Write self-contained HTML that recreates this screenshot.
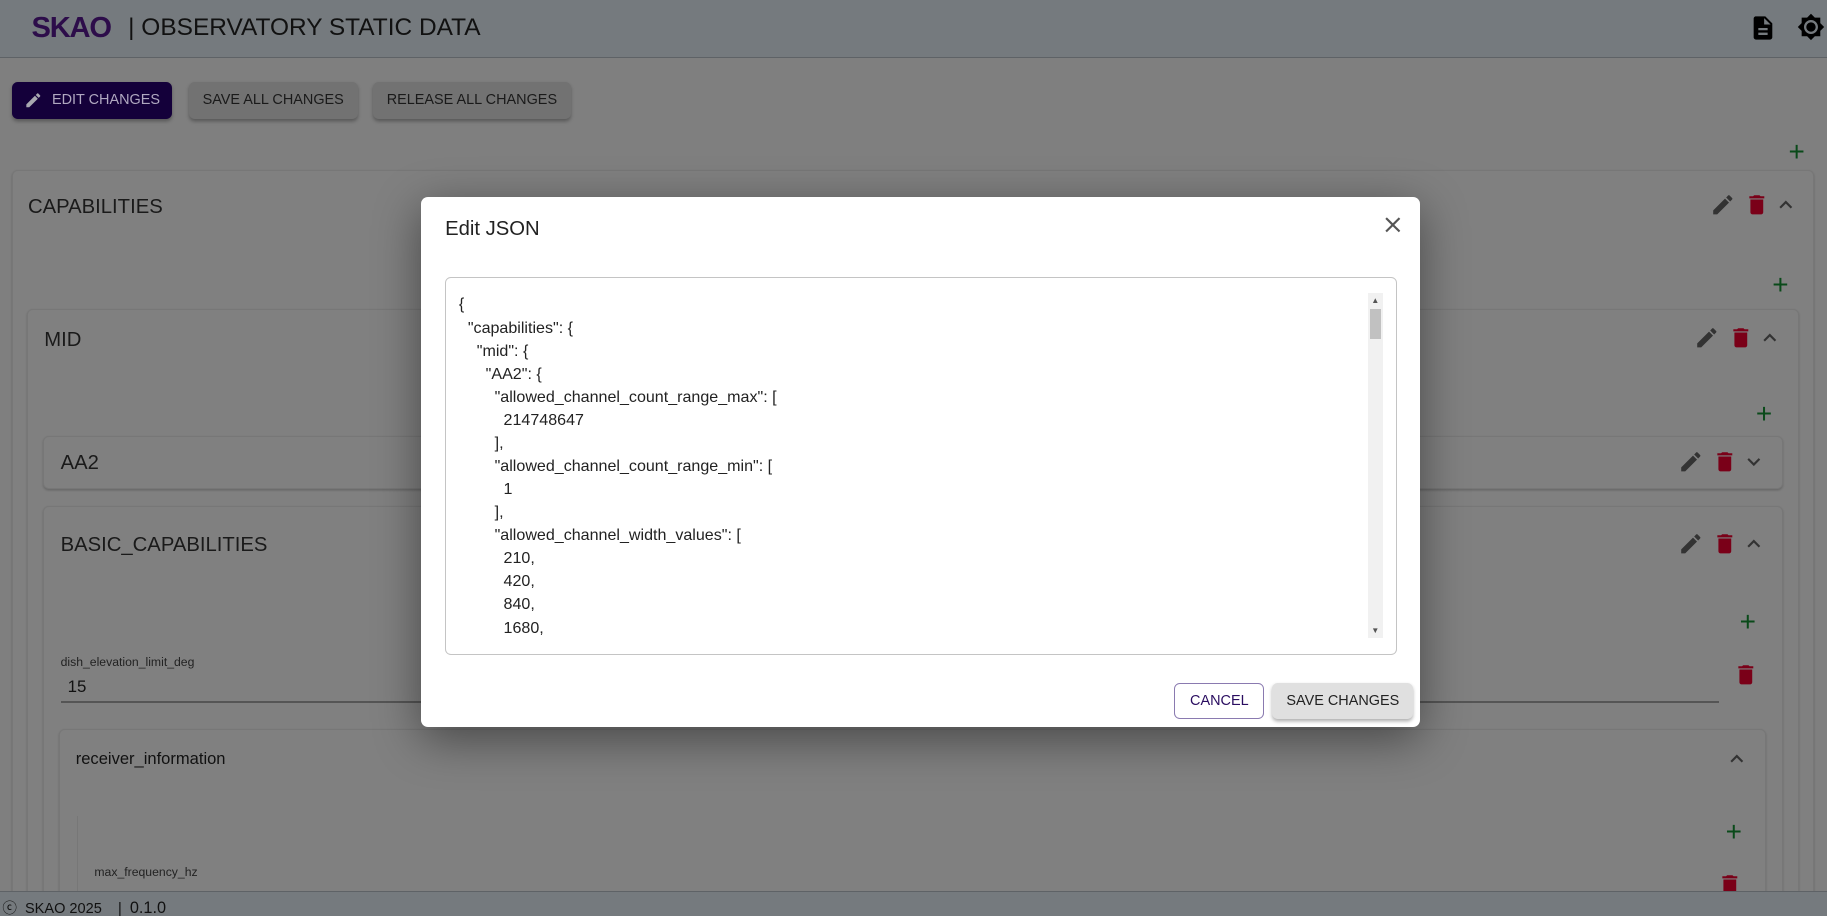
<!DOCTYPE html>
<html><head><meta charset="utf-8"><style>
*{box-sizing:border-box;margin:0;padding:0}
html,body{width:1827px;height:916px;overflow:hidden}
body{font-family:"Liberation Sans",sans-serif;background:#7f7f7f}
#root{zoom:1.16518;width:1568px;height:786px;position:relative;overflow:hidden;background:#7f7f7f}
.abs{position:absolute}
.hdr{left:0;top:0;width:1568px;height:50px;background:#757a7e;border-bottom:1px solid #5e6266}
.btn{position:absolute;top:70px;height:32px;border-radius:5px;font-size:12.4px;display:flex;align-items:center;justify-content:center;color:#1a1a1a;background:#727272;box-shadow:0 2px 3px rgba(0,0,0,.3)}
.card{position:absolute;border:1px solid #777;border-radius:5px;background:#808080;box-shadow:0 1px 2px rgba(0,0,0,.2)}
.t{position:absolute;font-size:17.4px;color:#1a1a1a}
.ic{position:absolute}
.foot{left:0;top:765px;width:1568px;height:21px;background:#757a7e;border-top:1px solid #5e6266;font-size:12.5px;color:#111}
.dlg{left:361px;top:169px;width:858px;height:455px;background:#fff;border-radius:6px;box-shadow:0 10px 40px rgba(0,0,0,.45)}
.json{position:absolute;left:21px;top:69px;width:817px;height:324px;border:1px solid #c4c4c4;border-radius:5px}
pre{font-family:"Liberation Sans",sans-serif;font-size:13.8px;line-height:19.8px;color:#222;position:absolute;left:11px;top:13px}
</style></head><body><div id="root">
<div class="abs hdr">
 <div class="abs" style="left:27px;top:10px;font-size:25px;font-weight:bold;color:#2d0d4a;letter-spacing:-1px">SKAO</div>
 <div class="abs" style="left:110px;top:12px;font-size:21px;color:#111">| OBSERVATORY STATIC DATA</div>
 <svg class="ic" style="left:1501px;top:12px" width="24" height="24" viewBox="0 0 24 24"><path fill="#000" d="M14 2H6c-1.1 0-2 .9-2 2v16c0 1.1.9 2 2 2h12c1.1 0 2-.9 2-2V8l-6-6zm2 16H8v-2h8v2zm0-4H8v-2h8v2zm-3-5V3.5L18.5 9H13z"/></svg>
 <svg class="ic" style="left:1542px;top:11px" width="24" height="24" viewBox="0 0 24 24"><path fill="#000" d="M20 8.69V4h-4.69L12 .69 8.69 4H4v4.69L.69 12 4 15.31V20h4.69L12 23.31 15.31 20H20v-4.69L23.31 12 20 8.69zM12 18c-3.310 0-6-2.69-6-6s2.69-6 6-6 6 2.69 6 6-2.69 6-6 6zm0-10c-2.21 0-4 1.79-4 4s1.79 4 4 4 4-1.790 4-4-1.79-4-4-4z"/></svg>
</div>
<div class="btn" style="left:10px;width:138px;background:#14003a;color:#b0a8c0"><svg width="16" height="16" viewBox="0 0 24 24" style="margin-right:8px"><path fill="#a8a8b0" d="M3 17.25V21h3.75L17.81 9.94l-3.75-3.75L3 17.25zM20.71 7.04a1 1 0 0 0 0-1.41l-2.34-2.34a1 1 0 0 0-1.41 0l-1.83 1.83 3.75 3.75 1.83-1.83z"/></svg>EDIT CHANGES</div>
<div class="btn" style="left:162px;width:145px">SAVE ALL CHANGES</div>
<div class="btn" style="left:320px;width:170px">RELEASE ALL CHANGES</div>
<div class="ic" style="left:1535px;top:117px;color:#0a4a1a;font-size:24px">+</div>
<div class="card" style="left:10px;top:146px;width:1547px;height:640px"></div>
<div class="t" style="left:24px;top:168px">CAPABILITIES</div>
<div class="ic" style="left:1521px;top:231px;color:#0a4a1a;font-size:24px">+</div>
<div class="card" style="left:23px;top:265px;width:1521px;height:521px"></div>
<div class="t" style="left:38px;top:282px">MID</div>
<div class="ic" style="left:1507px;top:342px;color:#0a4a1a;font-size:24px">+</div>
<div class="card" style="left:37px;top:374px;width:1493px;height:46px"></div>
<div class="t" style="left:52px;top:388px">AA2</div>
<div class="card" style="left:37px;top:434px;width:1493px;height:352px"></div>
<div class="t" style="left:52px;top:458px">BASIC_CAPABILITIES</div>
<div class="ic" style="left:1493px;top:520px;color:#0a4a1a;font-size:24px">+</div>
<div class="abs" style="left:52px;top:562px;font-size:10.5px;color:#222">dish_elevation_limit_deg</div>
<div class="abs" style="left:58px;top:581px;font-size:14.5px;color:#111">15</div>
<div class="abs" style="left:52px;top:602px;width:1423px;height:1px;background:#555"></div>
<div class="card" style="left:51px;top:626px;width:1465px;height:160px"></div>
<div class="abs" style="left:65px;top:643px;font-size:14.2px;color:#111">receiver_information</div>
<div class="ic" style="left:1481px;top:700px;color:#0a4a1a;font-size:24px">+</div>
<div class="abs" style="left:66px;top:700px;width:1px;height:70px;background:#777"></div>
<div class="abs" style="left:81px;top:742px;font-size:10.5px;color:#222">max_frequency_hz</div>
<svg width="0" height="0" style="position:absolute"><defs>
<symbol id="pen" viewBox="0 0 24 24"><path fill="#333" d="M3 17.25V21h3.75L17.81 9.94l-3.75-3.75L3 17.25zM20.71 7.04a1 1 0 0 0 0-1.41l-2.34-2.34a1 1 0 0 0-1.41 0l-1.830 1.83 3.75 3.75 1.83-1.83z"/></symbol>
<symbol id="del" viewBox="0 0 24 24"><path fill="#7a0018" d="M6 19c0 1.1.9 2 2 2h8c1.1 0 2-.9 2-2V7H6v12zM19 4h-3.5l-1-1h-5l-1 1H5v2h14V4z"/></symbol>
<symbol id="up" viewBox="0 0 24 24"><path fill="#333" d="M7.41 15.41 12 10.83l4.59 4.58L18 14l-6-6-6 6z"/></symbol>
<symbol id="dn" viewBox="0 0 24 24"><path fill="#333" d="M7.41 8.59 12 13.17l4.59-4.58L18 10l-6 6-6-6z"/></symbol>
</defs></svg>
<svg class="ic" style="left:1468px;top:165px" width="22" height="22"><use href="#pen"/></svg>
<svg class="ic" style="left:1497px;top:165px" width="22" height="22"><use href="#del"/></svg>
<svg class="ic" style="left:1522px;top:165px" width="22" height="22"><use href="#up"/></svg>
<svg class="ic" style="left:1454px;top:279px" width="22" height="22"><use href="#pen"/></svg>
<svg class="ic" style="left:1483px;top:279px" width="22" height="22"><use href="#del"/></svg>
<svg class="ic" style="left:1508px;top:279px" width="22" height="22"><use href="#up"/></svg>
<svg class="ic" style="left:1440px;top:385px" width="22" height="22"><use href="#pen"/></svg>
<svg class="ic" style="left:1469px;top:385px" width="22" height="22"><use href="#del"/></svg>
<svg class="ic" style="left:1494px;top:385px" width="22" height="22"><use href="#dn"/></svg>
<svg class="ic" style="left:1440px;top:456px" width="22" height="22"><use href="#pen"/></svg>
<svg class="ic" style="left:1469px;top:456px" width="22" height="22"><use href="#del"/></svg>
<svg class="ic" style="left:1494px;top:456px" width="22" height="22"><use href="#up"/></svg>
<svg class="ic" style="left:1487px;top:568px" width="22" height="22"><use href="#del"/></svg>
<svg class="ic" style="left:1480px;top:640px" width="22" height="22"><use href="#up"/></svg>
<svg class="ic" style="left:1474px;top:748px" width="22" height="22"><use href="#del"/></svg>
<div class="abs foot"><span style="position:absolute;left:2px;top:4px">ⓒ&nbsp; SKAO 2025 &nbsp;&nbsp;&nbsp;|&nbsp; <span style="font-size:14px">0.1.0</span></span></div>
<div class="abs dlg">
 <div class="abs" style="left:21px;top:18px;font-size:17.4px;color:#222">Edit JSON</div>
 <svg class="ic" style="left:823px;top:13px" width="22" height="22" viewBox="0 0 24 24"><path fill="#555" d="M19 6.41 17.59 5 12 10.59 6.41 5 5 6.41 10.59 12 5 17.59 6.41 19 12 13.41 17.59 19 19 17.59 13.41 12z"/></svg>
 <div class="json">
<pre>{
  "capabilities": {
    "mid": {
      "AA2": {
        "allowed_channel_count_range_max": [
          214748647
        ],
        "allowed_channel_count_range_min": [
          1
        ],
        "allowed_channel_width_values": [
          210,
          420,
          840,
          1680,</pre>
  <div class="abs" style="left:791px;top:13px;width:13px;height:296px;background:#f1f1f1"></div>
  <div class="abs" style="left:793px;top:26px;width:9px;height:26px;background:#c1c1c1"></div>
  <div class="abs" style="left:794px;top:15px;font-size:7px;color:#555">▲</div>
  <div class="abs" style="left:794px;top:298px;font-size:7px;color:#555">▼</div>
 </div>
 <div class="abs" style="left:647px;top:417px;width:77px;height:31px;border:1px solid #8a7ab0;border-radius:5px;font-size:12.4px;color:#2a0d60;display:flex;align-items:center;justify-content:center">CANCEL</div>
 <div class="abs" style="left:731px;top:417px;width:121px;height:31px;border-radius:5px;font-size:12.4px;color:#222;background:#e0e0e0;box-shadow:0 2px 3px rgba(0,0,0,.3);display:flex;align-items:center;justify-content:center">SAVE CHANGES</div>
</div>
</div></body></html>
